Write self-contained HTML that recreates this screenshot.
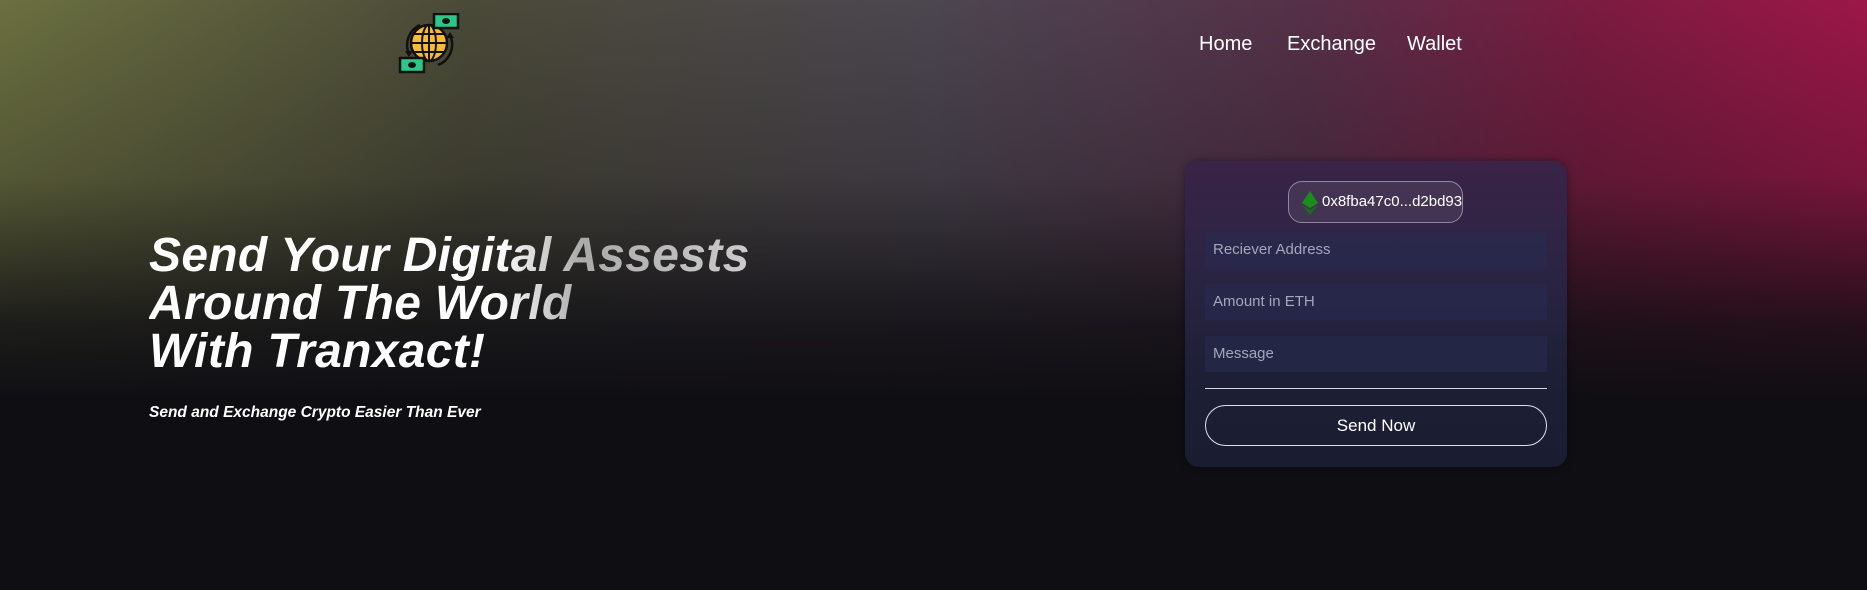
<!DOCTYPE html>
<html><head><meta charset="utf-8"><style>
*{margin:0;padding:0;box-sizing:border-box}
body{width:1867px;height:590px;overflow:hidden;background:#0f0e13;font-family:"Liberation Sans",sans-serif;position:relative}
.bg{position:absolute;inset:0;background:
linear-gradient(180deg,rgba(15,14,19,0) 0%,rgba(15,14,19,0.25) 30%,rgba(15,14,19,0.85) 55%,#0f0e13 68%),
linear-gradient(90deg,#6b7040 0%,#4a4a38 25%,#4c4650 50%,#553048 70%,#7a1b40 85%,#9c1747 100%);}
.nav{position:absolute;top:33px;color:#fff;font-size:20px}
h1{position:absolute;left:149px;top:232px;font-size:48px;line-height:48px;font-weight:bold;font-style:italic;color:#fff;letter-spacing:0.3px;
background:linear-gradient(90deg,#fff 0%,#fff 58%,#aaa 72%,#ccc 100%);-webkit-background-clip:text;background-clip:text;-webkit-text-fill-color:transparent}
.sub{position:absolute;left:149px;top:404px;font-size:15.5px;font-style:italic;font-weight:bold;color:#fff}
.card{position:absolute;left:1185px;top:161px;width:382px;height:306px;border-radius:14px;
background:linear-gradient(180deg,#3a2346 0%,#2b2444 35%,#1d1f36 70%,#1a1c30 100%);box-shadow:0 0 8px rgba(0,0,0,.4)}
.pill{position:absolute;left:103px;top:20px;width:175px;height:42px;border:1px solid #8c8a9e;border-radius:14px;background:rgba(255,255,255,.08);color:#fff;font-size:15px;line-height:40px;padding-left:33px}
.in{position:absolute;left:20px;width:342px;height:36px;background:rgba(40,44,80,.55);color:#a4a6bc;font-size:15px;line-height:36px;padding-left:8px}
.line{position:absolute;left:20px;top:227px;width:342px;height:1px;background:#d8d8e0}
.btn{position:absolute;left:20px;top:244px;width:342px;height:41px;border:1px solid #e0e0e8;border-radius:21px;color:#fff;font-size:17px;text-align:center;line-height:39px}
</style></head><body>
<div class="bg"></div>
<svg style="position:absolute;left:398px;top:13px" width="62" height="61" viewBox="0 0 62 61">
<path d="M22 12 A22 22 0 0 0 11 41" fill="none" stroke="#111" stroke-width="2.5"/>
<path d="M7 38 l4 6 l4 -6z" fill="#111"/>
<path d="M40 52 A22 22 0 0 0 52 22" fill="none" stroke="#111" stroke-width="2.5"/>
<path d="M48 25 l4 -6 l4 6z" fill="#111"/>
<circle cx="31" cy="30" r="18" fill="#f8bd2f" stroke="#111" stroke-width="2.5"/>
<ellipse cx="31" cy="30" rx="7" ry="18" fill="none" stroke="#111" stroke-width="2"/>
<path d="M13 30h36M16 21h30M16 39h30M31 12v36" stroke="#111" stroke-width="2"/>
<rect x="36" y="1" width="24" height="14" fill="#2cc88a" stroke="#111" stroke-width="2.5"/>
<ellipse cx="48" cy="8" rx="4" ry="3" fill="#111"/>
<rect x="2" y="45" width="24" height="14" fill="#2cc88a" stroke="#111" stroke-width="2.5"/>
<ellipse cx="14" cy="52" rx="4" ry="3" fill="#111"/>
</svg>
<div class="nav" style="left:1199px">Home</div>
<div class="nav" style="left:1287px">Exchange</div>
<div class="nav" style="left:1407px">Wallet</div>
<h1>Send Your Digital Assests<br>Around The World<br>With Tranxact!</h1>
<div class="sub">Send and Exchange Crypto Easier Than Ever</div>
<div class="card">
<div class="pill"><svg style="position:absolute;left:13px;top:9px" width="16" height="24" viewBox="0 0 16 24"><path d="M8 0L0 12l8 5 8-5z" fill="#1c8c1c"/><path d="M0 14l8 10 8-10-8 5z" fill="#137013"/></svg>0x8fba47c0...d2bd93</div>
<div class="in" style="top:71px">Reciever Address</div>
<div class="in" style="top:123px">Amount in ETH</div>
<div class="in" style="top:175px">Message</div>
<div class="line"></div>
<div class="btn">Send Now</div>
</div>
</body></html>
